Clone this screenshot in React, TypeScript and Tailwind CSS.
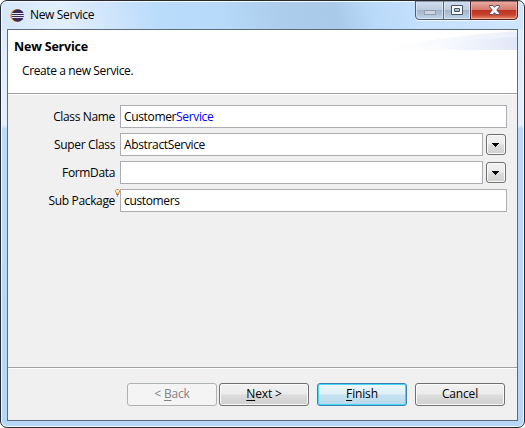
import type { ReactNode } from "react";

function EclipseIcon() {
  return (
    <svg width="15" height="15" viewBox="0 0 15 15" className="shrink-0">
      <circle cx="6.8" cy="7.5" r="6.5" fill="#f59b2d" />
      <circle cx="7.8" cy="7.5" r="6.2" fill="#342b5c" />
      <path d="M2 5.5H14M1.5 7.5H14M2 9.5H14" stroke="#e8e6f4" strokeWidth="1" />
    </svg>
  );
}

function CaptionButtons() {
  return (
    <svg width="103" height="20" viewBox="0 0 103 20" className="shrink-0">
      <defs>
        <linearGradient id="glass" x1="0" y1="0" x2="0" y2="1">
          <stop offset="0" stopColor="#d2dff0" />
          <stop offset=".48" stopColor="#bccbdd" />
          <stop offset=".5" stopColor="#9fb4cb" />
          <stop offset="1" stopColor="#c2d6eb" />
        </linearGradient>
        <linearGradient id="red" x1="0" y1="0" x2="0" y2="1">
          <stop offset="0" stopColor="#e9b0a5" />
          <stop offset=".46" stopColor="#d47b6c" />
          <stop offset=".5" stopColor="#bd3422" />
          <stop offset=".75" stopColor="#c8432d" />
          <stop offset="1" stopColor="#e99577" />
        </linearGradient>
      </defs>
      <path d="M0 0H103V16Q103 20 99 20H4Q0 20 0 16Z" fill="#eff7ff" />
      <path d="M.5 0H56V18.5H4Q.5 18.5 .5 15Z" fill="url(#glass)" stroke="#4d5b6e" />
      <path d="M55.5 0H102.5V15Q102.5 18.5 99 18.5H55.5Z" fill="url(#red)" stroke="#57212a" />
      <path d="M28.5 0V18" stroke="#59697e" />
      <path d="M1.5 1V15L4 17.5H27.5V1M29.5 1V17.5H54.5V1" fill="none" stroke="#e4eefa" strokeOpacity=".7" />
      <path d="M56.5 1V17.5H99L101.5 15V1" fill="none" stroke="#f5c2b5" strokeOpacity=".65" />
      <rect x="9.5" y="9.5" width="11" height="4" fill="#ccd5df" stroke="#929eb0" />
      <path fillRule="evenodd" d="M36.5 4.5H47.5V13.5H36.5ZM39.5 7.5V10.5H44.5V7.5Z" fill="#f8f9fb" stroke="#4b5369" />
      <path d="M74.5 4.5H78L79.5 6.3L81 4.5H84.5V5.7L81.8 9L84.5 12.3V13.5H81L79.5 11.7L78 13.5H74.5V12.3L77.2 9L74.5 5.7Z" fill="#f8f8fa" stroke="#565368" />
    </svg>
  );
}

function HeaderBanner() {
  return (
    <svg width="137" height="20" viewBox="0 0 137 20" className="shrink-0">
      <defs>
        <linearGradient id="wash" x1="0" y1="0" x2="1" y2="0">
          <stop offset="0" stopColor="#fff" />
          <stop offset=".3" stopColor="#f8faff" />
          <stop offset="1" stopColor="#dfe5f7" />
        </linearGradient>
      </defs>
      <path d="M0 20Q60 6 137 1V20Z" fill="url(#wash)" opacity=".6" />
      <path d="M32 20Q82 9 137 7V20Z" fill="url(#wash)" opacity=".8" />
    </svg>
  );
}

function HintBulb() {
  return (
    <svg width="5" height="8" viewBox="0 0 5 8" className="absolute -right-[5px] top-0">
      <path d="M1.5 5V4L.5 3V1.5L1.5.5H3.5L4.5 1.5V3L3.5 4V5Z" fill="#fff1c9" stroke="#dc852a" />
      <path d="M1.5 5.5H3.5M2 7H3" stroke="#52647b" />
    </svg>
  );
}

function DropButton() {
  return (
    <button className="ml-[3px] flex h-[21px] w-5 items-center justify-center rounded-[3px] border border-[#707070] bg-[linear-gradient(#f2f2f2_0%,#ebebeb_49%,#dddddd_51%,#cfcfcf_100%)] shadow-[inset_0_0_0_1px_#fafafa]">
      <svg width="8" height="4" viewBox="0 0 8 4" shapeRendering="crispEdges">
        <path d="M0 0H7V1H6V2H5V3H4V4H3V3H2V2H1V1H0Z" fill="#000" />
      </svg>
    </button>
  );
}

function Field({ label, children, drop, hint }: { label: ReactNode; children?: ReactNode; drop?: boolean; hint?: boolean }) {
  return (
    <div className="flex h-[23px] items-center">
      <label className="relative flex h-full w-[107px] items-center justify-end whitespace-nowrap">
        {label}
        {hint && <HintBulb />}
      </label>
      <div className={`ml-[5px] flex h-[23px] items-center whitespace-nowrap border border-[#abadb3] bg-white pl-[3px] ${drop ? "w-[363px]" : "w-[387px]"}`}>
        {children}
      </div>
      {drop && <DropButton />}
    </div>
  );
}

const button = "flex h-[23px] w-[90px] items-center justify-center whitespace-pre rounded-[3px] border pb-px tracking-[-0.15px]";
const raised = "border-[#707070] bg-[linear-gradient(#f2f2f2_0%,#ebebeb_49%,#dddddd_51%,#cfcfcf_100%)] shadow-[inset_0_0_0_1px_#fafafa]";

function Key({ children }: { children: ReactNode }) {
  return <span className="underline decoration-1 underline-offset-[2px]">{children}</span>;
}

export default function App() {
  return (
    <div className="h-[428px] w-[525px] overflow-hidden bg-white font-['Open_Sans','Noto_Sans',sans-serif] text-[12px] leading-4 tracking-[-0.35px] text-black">
      <div className="flex h-full flex-col rounded-[7px] border border-[#252a35] bg-[linear-gradient(#dceafb_0px,#e2effd_100px,#e2effd_124px,#b9dafa_128px,#b7d7f7_100%)] px-[6px] shadow-[inset_0_0_0_1px_#f4faff]">
        <header className="-mx-[5px] mt-px flex h-[27px] items-start rounded-t-[5px] bg-[linear-gradient(75deg,#d6e7fa_0%,#e2effd_12%,#d4e7fb_19%,#badcfb_30%,#b8dafa_42%,#acceec_53%,#a9cae9_64%,#b9daf9_71%,#c4e0fd_80%,#d0e6fd_100%)] pl-2">
          <div className="flex h-[26px] items-center gap-[5px]">
            <EclipseIcon />
            <h1>New Service</h1>
          </div>
          <div className="-mt-px ml-auto mr-[5px]"><CaptionButtons /></div>
        </header>
        <main className="flex h-[392px] flex-col border border-[#5c6b7e] bg-[#f0f0f0]">
          <section className="flex h-[64px] justify-between border-b border-[#a0a0a0] bg-white">
            <div className="pl-[6px] pt-[9px]">
              <h2 className="text-[12.5px] font-bold tracking-[-0.2px]">New Service</h2>
              <p className="pl-2 pt-[8px] tracking-[-0.38px]">Create a new Service.</p>
            </div>
            <HeaderBanner />
          </section>
          <section className="flex flex-1 flex-col gap-[5px] border-t border-white pt-[10px]">
            <Field label="Class Name">Customer<span className="text-[#0000ff]">Service</span></Field>
            <Field label="Super Class" drop>AbstractService</Field>
            <Field label="FormData" drop />
            <Field label="Sub Package" hint>customers</Field>
          </section>
          <footer className="flex h-[53px] justify-end border-t border-[#a0a0a0] pr-3 shadow-[inset_0_1px_0_#fff]">
            <div className="flex pt-[15px]">
              <button disabled className={`${button} mr-[2px] border-[#adb2b5] bg-[#f4f4f4] text-[#838383]`}>{"< "}<Key>B</Key>ack</button>
              <button className={`${button} ${raised} mr-2`}><Key>N</Key>{"ext >"}</button>
              <button className={`${button} mr-2 border-[#3c7fb1] bg-[linear-gradient(#edf6fa_0%,#ddeff8_49%,#c7e3f1_51%,#b9d9eb_100%)] shadow-[inset_0_0_0_1px_#45d8fb]`}><Key>F</Key>inish</button>
              <button className={`${button} ${raised}`}>Cancel</button>
            </div>
          </footer>
        </main>
      </div>
    </div>
  );
}
